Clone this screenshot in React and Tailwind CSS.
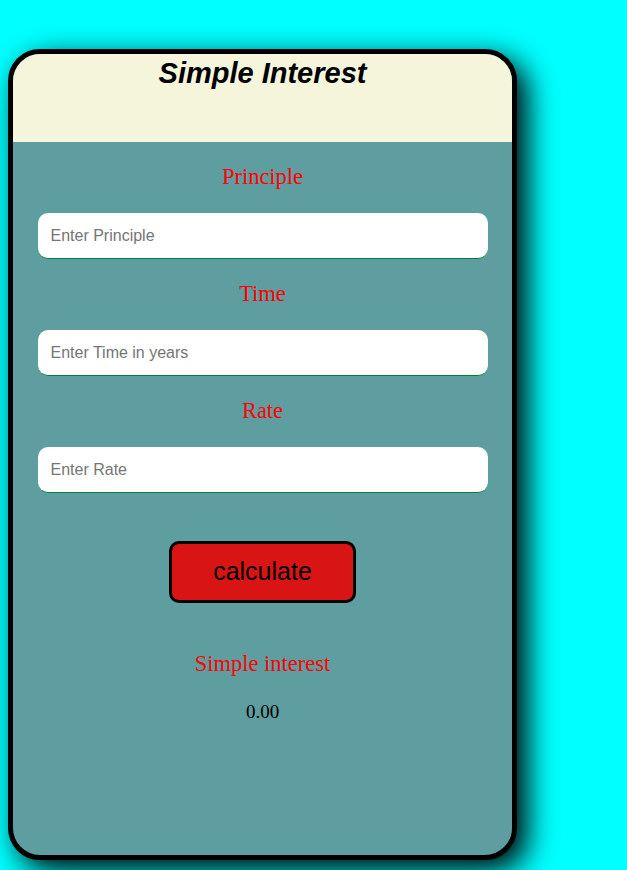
export default function App() {
  return (
    <div className="min-h-[870px] bg-[#00ffff] pt-[49px] pl-[8px]">
      <div className="w-[509px] h-[811px] rounded-[32px] border-[5px] border-black overflow-hidden shadow-[10px_10px_30px_black] bg-[#5f9ea0]">
        <div className="h-[88px] bg-[#f5f5dc] text-center">
          <h1 className="pt-[3px] text-[29px] leading-[33px] font-bold italic text-black" style={{ fontFamily: '"Liberation Sans", Arial, sans-serif' }}>
            Simple Interest
          </h1>
        </div>
        <div className="flex flex-col items-center" style={{ fontFamily: '"Liberation Serif", "Times New Roman", serif' }}>
          <Label className="mt-[22px]">Principle</Label>
          <Field placeholder="Enter Principle" />
          <Label className="mt-[22px]">Time</Label>
          <Field placeholder="Enter Time in years" />
          <Label className="mt-[22px]">Rate</Label>
          <Field placeholder="Enter Rate" />
          <button className="mt-[48px] w-[187px] h-[62px] bg-[#d91414] border-[3px] border-black rounded-[10px] text-[25px] text-black" style={{ fontFamily: '"Liberation Sans", Arial, sans-serif' }}>
            calculate
          </button>
          <Label className="mt-[48px]">Simple interest</Label>
          <p className="mt-[25px] text-[19px] leading-[22px] text-black">0.00</p>
        </div>
      </div>
    </div>
  );
}

function Label({ children, className }) {
  return <p className={`${className} text-[22.5px] leading-[25px] text-[#ff0000]`}>{children}</p>;
}

function Field({ placeholder }) {
  return (
    <input
      placeholder={placeholder}
      className="mt-[24px] w-[450px] h-[46px] bg-white rounded-[10px] border-b border-b-green-700 px-[13px] text-[16px] placeholder:text-[#757575] outline-none"
      style={{ fontFamily: '"Liberation Sans", Arial, sans-serif' }}
    />
  );
}
